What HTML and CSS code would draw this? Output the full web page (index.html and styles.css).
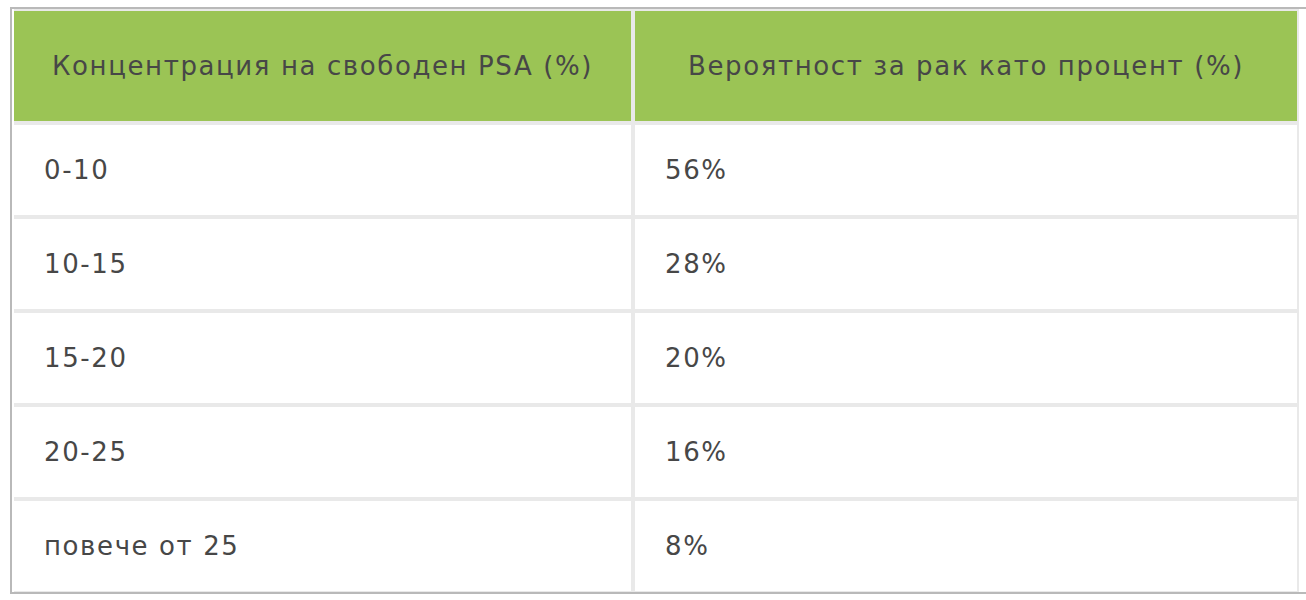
FILE: index.html
```html
<!DOCTYPE html>
<html lang="bg">
<head>
<meta charset="utf-8">
<title>PSA</title>
<link rel="stylesheet" href="styles.css">
</head>
<body>
<div class="wrap">
  <div class="table">
    <div class="cell head">Концентрация на свободен PSA (%)</div>
    <div class="cell head">Вероятност за рак като процент (%)</div>
    <div class="cell">0-10</div>
    <div class="cell">56%</div>
    <div class="cell">10-15</div>
    <div class="cell">28%</div>
    <div class="cell">15-20</div>
    <div class="cell">20%</div>
    <div class="cell">20-25</div>
    <div class="cell">16%</div>
    <div class="cell">повече от 25</div>
    <div class="cell">8%</div>
  </div>
</div>
</body>
</html>
```
FILE: styles.css
```css
html, body {
  margin: 0;
  padding: 0;
  background: #ffffff;
}
body {
  font-family: "DejaVu Sans", "Open Sans", sans-serif;
  color: #474747;
}
.wrap {
  margin-top: 7px;
  margin-left: 10px;
  border: 2px solid #b9b9b9;
  border-right: none;
  padding-left: 2px;
}
.table {
  display: grid;
  grid-template-columns: 617px 662px;
  grid-template-rows: 110px repeat(5, 90px);
  gap: 4px;
  width: max-content;
  background: #e9e9e9;
  border-top: 2px solid #e9e9e9;
  border-right: 2px solid #e9e9e9;
  border-bottom: 1px solid #e9e9e9;
}
.cell {
  background: #ffffff;
  display: flex;
  align-items: center;
  padding-left: 30px;
  font-size: 26px;
  letter-spacing: 1.6px;
}
.cell.head {
  background: #9bc455;
  justify-content: center;
  padding-left: 0;
}
```
